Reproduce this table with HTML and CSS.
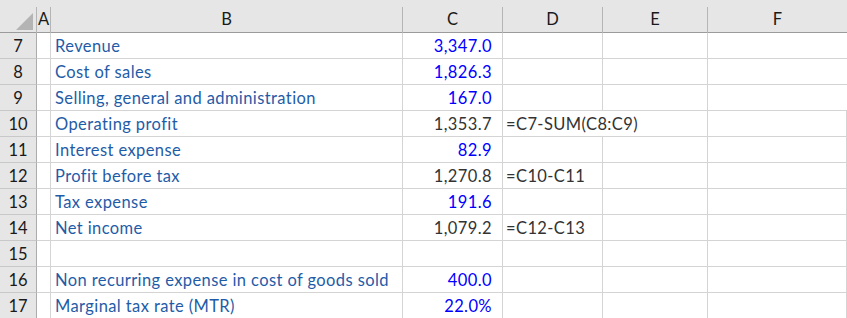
FILE: index.html
```html
<!DOCTYPE html>
<html>
<head>
<meta charset="utf-8">
<link rel="stylesheet" href="styles.css">
</head>
<body>
<div class="sheet">
  <div class="hdr corner"><svg class="tri" width="18" height="17" viewBox="0 0 18 17"><polygon points="17,0 17,17 0,17" fill="#b4b4b4"/></svg></div>
  <div class="hdr col">A</div>
  <div class="hdr col">B</div>
  <div class="hdr col">C</div>
  <div class="hdr col">D</div>
  <div class="hdr col">E</div>
  <div class="hdr col last">F</div>

  <div class="rh">7</div><div class="c"></div><div class="c lbl">Revenue</div><div class="c num in">3,347.0</div><div class="c"></div><div class="c"></div><div class="c"></div>
  <div class="rh">8</div><div class="c"></div><div class="c lbl">Cost of sales</div><div class="c num in">1,826.3</div><div class="c"></div><div class="c"></div><div class="c"></div>
  <div class="rh">9</div><div class="c"></div><div class="c lbl">Selling, general and administration</div><div class="c num in">167.0</div><div class="c"></div><div class="c"></div><div class="c"></div>
  <div class="rh">10</div><div class="c"></div><div class="c lbl">Operating profit</div><div class="c num calc">1,353.7</div><div class="c fx span">=C7-SUM(C8:C9)</div><div class="c"></div>
  <div class="rh">11</div><div class="c"></div><div class="c lbl">Interest expense</div><div class="c num in">82.9</div><div class="c"></div><div class="c"></div><div class="c"></div>
  <div class="rh">12</div><div class="c"></div><div class="c lbl">Profit before tax</div><div class="c num calc">1,270.8</div><div class="c fx">=C10-C11</div><div class="c"></div><div class="c"></div>
  <div class="rh">13</div><div class="c"></div><div class="c lbl">Tax expense</div><div class="c num in">191.6</div><div class="c"></div><div class="c"></div><div class="c"></div>
  <div class="rh">14</div><div class="c"></div><div class="c lbl">Net income</div><div class="c num calc">1,079.2</div><div class="c fx">=C12-C13</div><div class="c"></div><div class="c"></div>
  <div class="rh">15</div><div class="c"></div><div class="c lbl"></div><div class="c num"></div><div class="c"></div><div class="c"></div><div class="c"></div>
  <div class="rh">16</div><div class="c"></div><div class="c lbl">Non recurring expense in cost of goods sold</div><div class="c num in">400.0</div><div class="c"></div><div class="c"></div><div class="c"></div>
  <div class="rh">17</div><div class="c"></div><div class="c lbl">Marginal tax rate (MTR)</div><div class="c num in">22.0%</div><div class="c"></div><div class="c"></div><div class="c"></div>
</div>
</body>
</html>
```

FILE: styles.css
```css
html, body {
  margin: 0;
  padding: 0;
  background: #ffffff;
  overflow: hidden;
}
.sheet {
  display: grid;
  grid-template-columns: 37px 14px 352px 100px 100px 105px 1fr;
  grid-template-rows: 33px repeat(11, 26px);
  width: 847px;
  font-family: Lato, "Open Sans", sans-serif;
  font-size: 16.5px;
  letter-spacing: 0.4px;
  background: #fff;
}
.hdr {
  background: #e6e6e6;
  box-sizing: border-box;
  color: #1a1a1a;
  border-style: solid;
  border-width: 0 1px 0 0;
  border-image: linear-gradient(to bottom, #e6e6e6 0, #e6e6e6 8px, #b5b5b5 8px) 1;
  box-shadow: inset 0 -1px 0 #9b9b9b;
}
.hdr.col {
  display: flex;
  align-items: flex-end;
  justify-content: center;
  line-height: 22px;
  padding-bottom: 3px;
  letter-spacing: 0;
}
.hdr.last {
  border-right: none;
  border-image: none;
}
.corner {
  display: flex;
  align-items: flex-end;
  justify-content: flex-end;
  padding: 0 2px 3px 0;
}
.rh {
  background: #e6e6e6;
  border-right: 1px solid #ababab;
  border-bottom: 1px solid #c8c8c8;
  box-sizing: border-box;
  color: #1a1a1a;
  display: flex;
  align-items: flex-end;
  justify-content: center;
  padding-bottom: 2px;
  line-height: 20px;
  letter-spacing: 0;
}
.c {
  border-right: 1px solid #d4d4d4;
  border-bottom: 1px solid #d4d4d4;
  box-sizing: border-box;
  display: flex;
  align-items: flex-end;
  padding: 0 4px 2px 4px;
  line-height: 20px;
  white-space: nowrap;
  min-width: 0;
}
.lbl {
  color: #1f5ca8;
}
.num {
  justify-content: flex-end;
  padding-right: 10px;
}
.in {
  color: #0000ff;
}
.calc {
  color: #333333;
}
.fx {
  color: #333333;
  padding-left: 3px;
}
.span {
  grid-column: span 2;
}
.sheet > .c:nth-child(7n) {
  border-right: none;
}
```
